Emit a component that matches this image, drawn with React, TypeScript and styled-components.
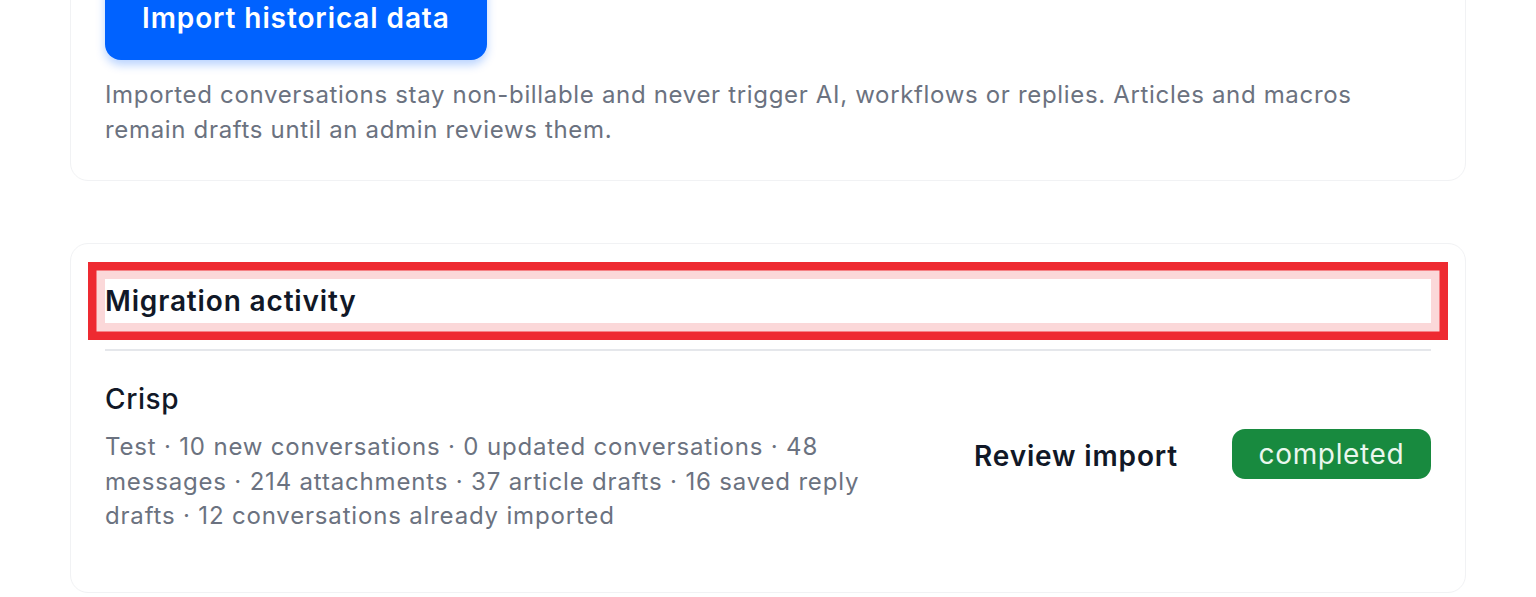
import React from "react";
import styled, { createGlobalStyle } from "styled-components";

const Global = createGlobalStyle`
  html, body { margin: 0; padding: 0; background: #ffffff; }
  body { font-family: Inter, "Noto Sans", "Liberation Sans", sans-serif; -webkit-font-smoothing: antialiased; }
  * { box-sizing: border-box; }
`;

const Page = styled.div`
  display: flex;
  flex-direction: column;
  gap: 62px;
  padding: 0 70px 40px 70px;
  margin-top: -60px;
`;

const Card = styled.section<{ $bottom?: number }>`
  background: #ffffff;
  border: 1.5px solid #f1f2f4;
  border-radius: 18px;
  padding: 35px 34px ${(p) => p.$bottom ?? 35}px 34px;
  display: flex;
  flex-direction: column;
`;

const PrimaryButton = styled.button`
  align-self: flex-start;
  height: 84px;
  padding: 0 37px;
  border: none;
  border-radius: 16px;
  background: #0062ff;
  color: #ffffff;
  font-family: inherit;
  font-size: 28px;
  font-weight: 600;
  letter-spacing: 0.9px;
  box-shadow: 0 5px 10px rgba(0, 98, 255, 0.28);
  cursor: pointer;
`;

const Hint = styled.p`
  margin: 18px 0 0 0;
  font-size: 24px;
  line-height: 34.5px;
  letter-spacing: 0.67px;
  color: #6b7280;
  max-width: 1300px;
`;

const Heading = styled.h2`
  margin: 0;
  height: 44px;
  display: flex;
  align-items: center;
  font-size: 28px;
  font-weight: 600;
  letter-spacing: 0.85px;
  color: #111827;
  box-shadow: 0 0 0 8.5px #fbd8d9, 0 0 0 17px #ee2a31;
`;

const Divider = styled.hr`
  margin: 26px 0 0 0;
  border: none;
  border-top: 2px solid #e5e7eb;
`;

const Row = styled.div`
  display: flex;
  align-items: center;
  justify-content: space-between;
  padding: 28px 0 23px 0;
`;

const Info = styled.div`
  display: flex;
  flex-direction: column;
  max-width: 780px;
`;

const SourceName = styled.div`
  font-size: 28px;
  line-height: 40px;
  font-weight: 500;
  letter-spacing: 0.6px;
  color: #111827;
`;

const Meta = styled.div`
  margin-top: 11px;
  font-size: 24px;
  line-height: 34.5px;
  letter-spacing: 0.82px;
  color: #6b7280;
`;

const Actions = styled.div`
  display: flex;
  align-items: center;
  gap: 54px;
  margin-top: -4px;
`;

const LinkButton = styled.button`
  border: none;
  background: none;
  padding: 0;
  margin-top: 4px;
  font-family: inherit;
  font-size: 28px;
  font-weight: 600;
  letter-spacing: 0.85px;
  color: #111827;
  cursor: pointer;
`;

const StatusPill = styled.span<{ $tone: string }>`
  display: inline-flex;
  align-items: center;
  justify-content: center;
  height: 50px;
  width: 199px;
  border-radius: 13px;
  background: ${(p) => p.$tone};
  color: #eaf7ee;
  font-size: 28px;
  font-weight: 400;
  letter-spacing: 0.65px;
`;

export default function App() {
  return (
    <>
      <Global />
      <Page>
        <Card $bottom={33}>
          <PrimaryButton>Import historical data</PrimaryButton>
          <Hint>
            Imported conversations stay non-billable and never trigger AI, workflows or replies. Articles and macros
            remain drafts until an admin reviews them.
          </Hint>
        </Card>
        <Card>
          <Heading>Migration activity</Heading>
          <Divider />
          <Row>
            <Info>
              <SourceName>Crisp</SourceName>
              <Meta>
                Test · 10 new conversations · 0 updated conversations · 48 messages · 214 attachments · 37 article
                drafts · 16 saved reply drafts · 12 conversations already imported
              </Meta>
            </Info>
            <Actions>
              <LinkButton>Review import</LinkButton>
              <StatusPill $tone="#188a3f">completed</StatusPill>
            </Actions>
          </Row>
        </Card>
      </Page>
    </>
  );
}
